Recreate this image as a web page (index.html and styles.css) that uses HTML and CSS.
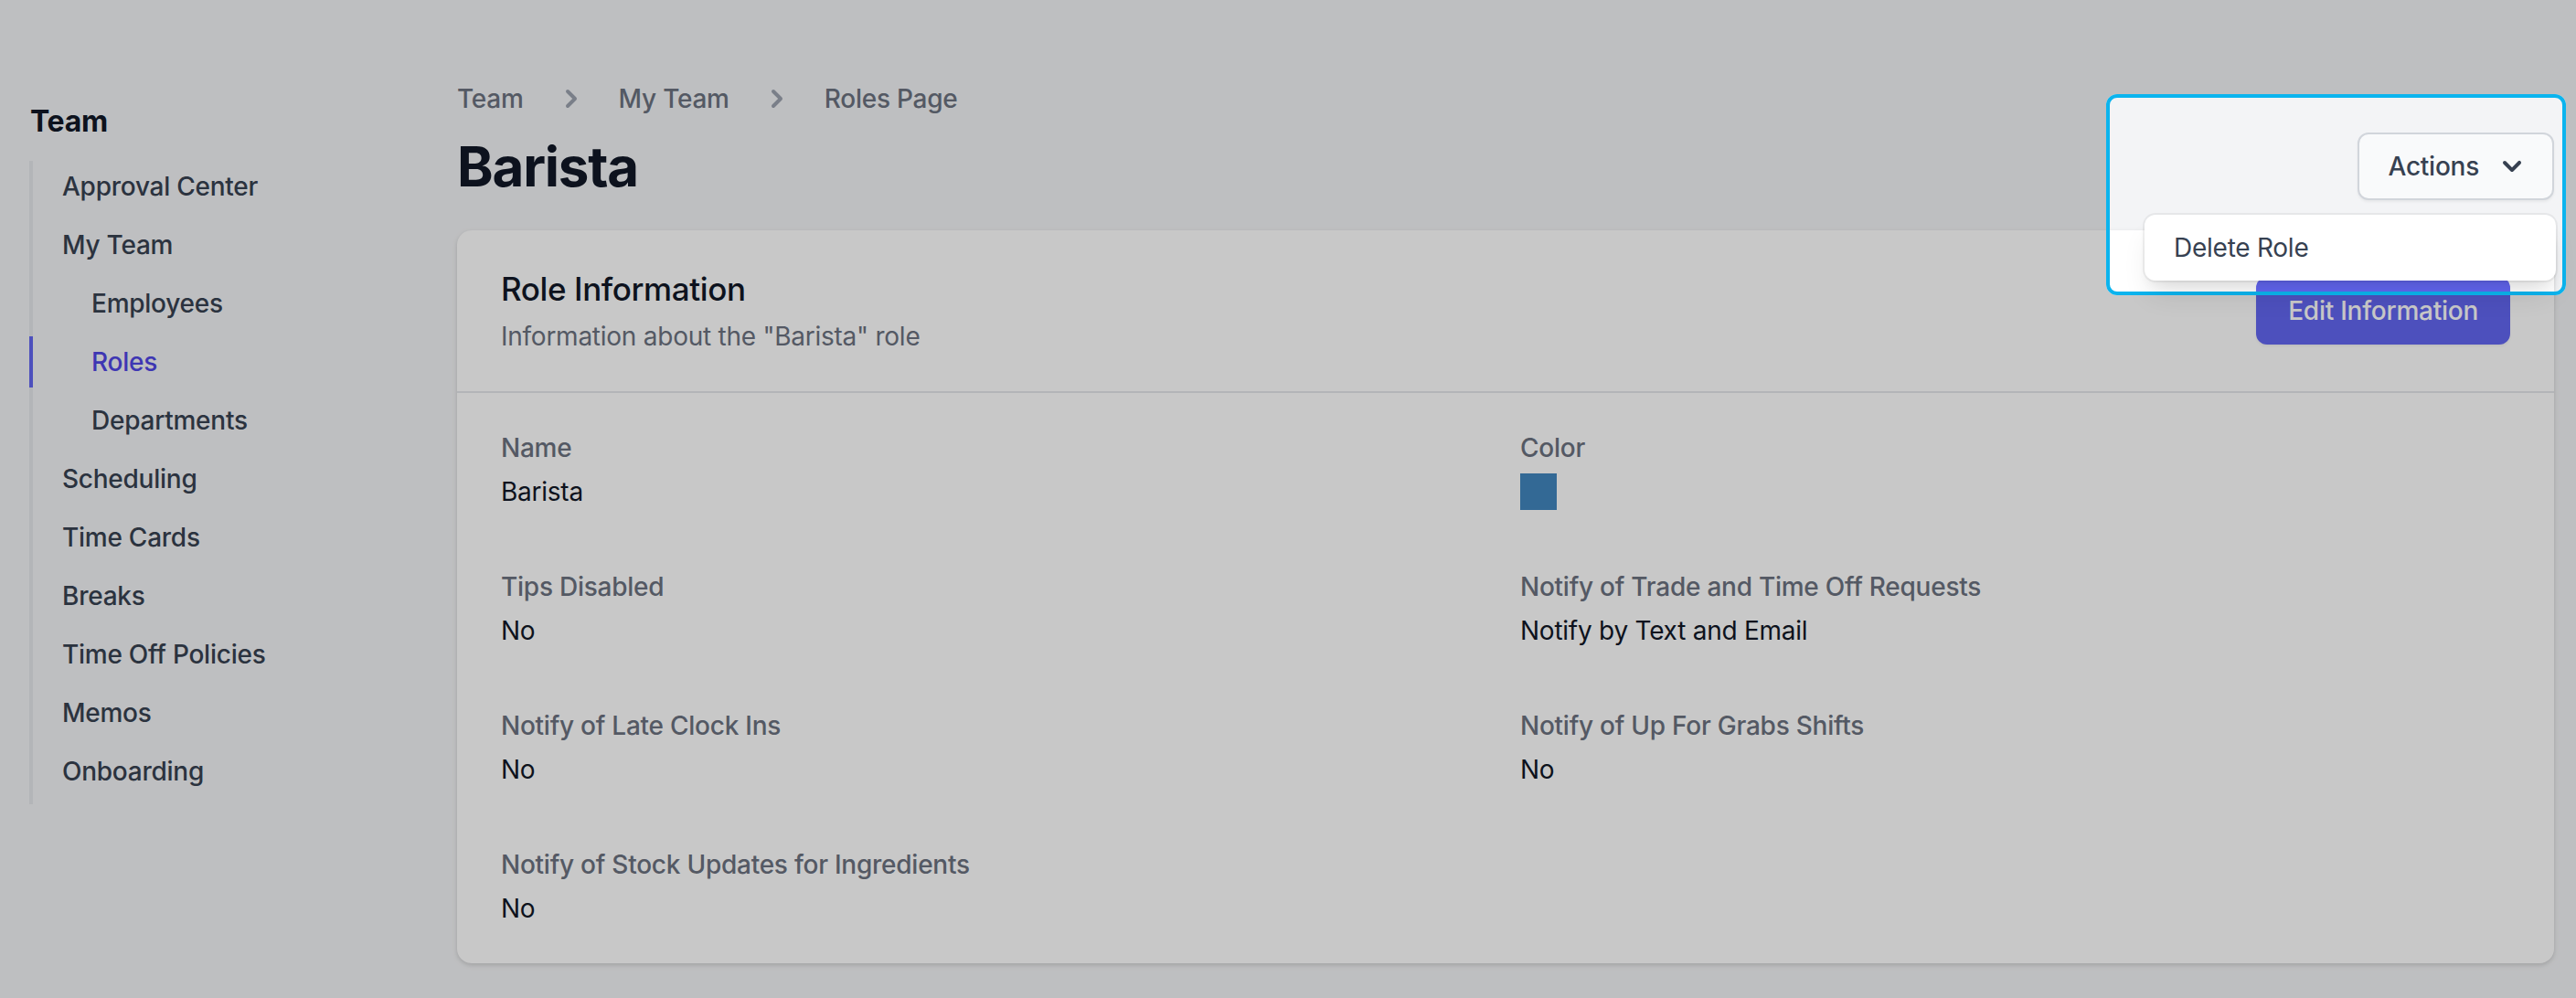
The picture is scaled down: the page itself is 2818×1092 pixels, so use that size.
FILE: index.html
```html
<!DOCTYPE html>
<html lang="en">
<head>
<meta charset="utf-8">
<title>Barista - Roles Page</title>
<link rel="stylesheet" href="styles.css">
</head>
<body>
<div class="layout">
  <aside class="sidebar">
    <h2 class="side-title">Team</h2>
    <ul class="side-nav">
      <li><a class="nav-item">Approval Center</a></li>
      <li><a class="nav-item">My Team</a></li>
      <li><a class="nav-item sub">Employees</a></li>
      <li><a class="nav-item sub active">Roles</a></li>
      <li><a class="nav-item sub">Departments</a></li>
      <li><a class="nav-item">Scheduling</a></li>
      <li><a class="nav-item">Time Cards</a></li>
      <li><a class="nav-item">Breaks</a></li>
      <li><a class="nav-item">Time Off Policies</a></li>
      <li><a class="nav-item">Memos</a></li>
      <li><a class="nav-item">Onboarding</a></li>
    </ul>
  </aside>

  <main class="main">
    <nav class="breadcrumb">
      <ol class="crumbs">
        <li class="crumb"><a class="crumb-link">Team</a></li>
        <li class="crumb">
          <svg class="crumb-chev" viewBox="0 0 20 20" fill="currentColor"><path fill-rule="evenodd" d="M7.293 14.707a1 1 0 010-1.414L10.586 10 7.293 6.707a1 1 0 011.414-1.414l4 4a1 1 0 010 1.414l-4 4a1 1 0 01-1.414 0z" clip-rule="evenodd"/></svg>
          <a class="crumb-link">My Team</a>
        </li>
        <li class="crumb">
          <svg class="crumb-chev" viewBox="0 0 20 20" fill="currentColor"><path fill-rule="evenodd" d="M7.293 14.707a1 1 0 010-1.414L10.586 10 7.293 6.707a1 1 0 011.414-1.414l4 4a1 1 0 010 1.414l-4 4a1 1 0 01-1.414 0z" clip-rule="evenodd"/></svg>
          <a class="crumb-link">Roles Page</a>
        </li>
      </ol>
    </nav>

    <div class="page-head">
      <h1 class="page-title">Barista</h1>
      <div class="actions">
        <button class="actions-btn" type="button">Actions
          <svg class="actions-chev" viewBox="0 0 20 20" fill="currentColor"><path fill-rule="evenodd" d="M5.293 7.293a1 1 0 011.414 0L10 10.586l3.293-3.293a1 1 0 111.414 1.414l-4 4a1 1 0 01-1.414 0l-4-4a1 1 0 010-1.414z" clip-rule="evenodd"/></svg>
        </button>
        <div class="menu">
          <a class="menu-item">Delete Role</a>
        </div>
        <div class="spotlight"></div>
      </div>
    </div>

    <section class="card">
      <div class="card-head">
        <div>
          <h3 class="card-title">Role Information</h3>
          <p class="card-sub">Information about the "Barista" role</p>
        </div>
        <button class="btn-primary" type="button">Edit Information</button>
      </div>
      <dl class="info-grid">
        <div class="field">
          <dt class="label">Name</dt>
          <dd class="value">Barista</dd>
        </div>
        <div class="field">
          <dt class="label">Color</dt>
          <dd class="value"><span class="swatch"></span></dd>
        </div>
        <div class="field">
          <dt class="label">Tips Disabled</dt>
          <dd class="value">No</dd>
        </div>
        <div class="field">
          <dt class="label">Notify of Trade and Time Off Requests</dt>
          <dd class="value">Notify by Text and Email</dd>
        </div>
        <div class="field">
          <dt class="label">Notify of Late Clock Ins</dt>
          <dd class="value">No</dd>
        </div>
        <div class="field">
          <dt class="label">Notify of Up For Grabs Shifts</dt>
          <dd class="value">No</dd>
        </div>
        <div class="field">
          <dt class="label">Notify of Stock Updates for Ingredients</dt>
          <dd class="value">No</dd>
        </div>
      </dl>
    </section>
  </main>
</div>
</body>
</html>
```

FILE: styles.css
```css
* { box-sizing: border-box; }

html, body {
  margin: 0;
  height: 100%;
}

body {
  background: #f3f4f6;
  font-family: Inter, "Noto Sans", "Liberation Sans", sans-serif;
  color: #111827;
  letter-spacing: -0.25px;
  overflow: hidden;
  -webkit-font-smoothing: antialiased;
}

.layout {
  display: flex;
  align-items: flex-start;
}

/* Sidebar */
.sidebar {
  width: 500px;
  flex-shrink: 0;
  padding: 109px 0 0 32px;
}

.side-title {
  margin: 0 0 19px 1px;
  font-size: 32px;
  line-height: 48px;
  font-weight: 700;
  color: #111827;
}

.side-nav {
  list-style: none;
  margin: 0;
  padding: 0 0 8px;
  border-left: 4px solid #e5e7eb;
  display: flex;
  flex-direction: column;
  gap: 8px;
}

.nav-item {
  display: block;
  padding: 8px 0 8px 32px;
  font-size: 28px;
  line-height: 40px;
  font-weight: 500;
  color: #374151;
  text-decoration: none;
}

.nav-item.sub { padding-left: 64px; }

.nav-item.active {
  margin-left: -4px;
  border-left: 4px solid #6366f1;
  color: #4f46e5;
}

/* Main */
.main {
  flex: 1;
  min-width: 0;
  padding: 88px 24px 0 0;
}

.crumbs {
  list-style: none;
  margin: 0;
  padding: 0;
  display: flex;
  align-items: center;
  gap: 32px;
}

.crumb {
  display: flex;
  align-items: center;
  gap: 32px;
}

.crumb-link {
  font-size: 28px;
  line-height: 40px;
  font-weight: 500;
  color: #6b7280;
  text-decoration: none;
}

.crumb-chev {
  width: 40px;
  height: 40px;
  color: #9ca3af;
  flex-shrink: 0;
}

.page-head {
  display: flex;
  justify-content: space-between;
  align-items: center;
  margin-top: 17px;
}

.page-title {
  margin: 0;
  font-size: 60px;
  line-height: 72px;
  font-weight: 700;
  letter-spacing: -1.2px;
  color: #111827;
}

.actions {
  position: relative;
}

.actions-btn {
  display: inline-flex;
  align-items: center;
  padding: 15px 24px 15px 32px;
  border: 2px solid #d1d5db;
  border-radius: 12px;
  background: #f9fafb;
  box-shadow: 0 2px 3px rgba(0, 0, 0, 0.05);
  font-family: inherit;
  font-size: 28px;
  line-height: 40px;
  font-weight: 500;
  letter-spacing: inherit;
  color: #374151;
}

.actions-chev {
  width: 40px;
  height: 40px;
  margin-left: 16px;
}

.menu {
  position: absolute;
  right: -2px;
  top: calc(100% + 16px);
  width: 450px;
  background: #fff;
  border-radius: 12px;
  box-shadow: 0 0 0 2px rgba(0, 0, 0, 0.05), 0 20px 30px -6px rgba(0, 0, 0, 0.1), 0 8px 12px -4px rgba(0, 0, 0, 0.06);
  z-index: 20;
}

.menu-item {
  display: block;
  padding: 16px 32px;
  font-size: 28px;
  line-height: 40px;
  color: #374151;
  text-decoration: none;
}

.spotlight {
  position: absolute;
  left: -275px;
  top: -42px;
  width: 503px;
  height: 220px;
  border: 4px solid #0bb4ee;
  border-radius: 12px;
  box-shadow: 0 0 0 4000px rgba(0, 0, 0, 0.216);
  z-index: 10;
  pointer-events: none;
}

/* Card */
.card {
  margin-top: 33px;
  background: #fff;
  border-radius: 16px;
  box-shadow: 0 2px 6px rgba(0, 0, 0, 0.1), 0 2px 4px rgba(0, 0, 0, 0.06);
}

.card-head {
  display: flex;
  justify-content: space-between;
  align-items: center;
  padding: 40px 48px;
  border-bottom: 2px solid #e5e7eb;
}

.card-title {
  margin: 0;
  font-size: 35px;
  line-height: 48px;
  font-weight: 500;
  letter-spacing: -0.4px;
  color: #111827;
}

.card-sub {
  margin: 8px 0 0;
  font-size: 28px;
  line-height: 40px;
  color: #6b7280;
}

.btn-primary {
  padding: 16px 34px;
  border: 1px solid transparent;
  border-radius: 12px;
  background: #6366f1;
  color: #fff;
  font-family: inherit;
  font-size: 28px;
  line-height: 40px;
  font-weight: 500;
  letter-spacing: inherit;
  box-shadow: 0 2px 3px rgba(0, 0, 0, 0.05);
}

.info-grid {
  margin: 0;
  padding: 40px 48px;
  display: grid;
  grid-template-columns: 1fr 1fr;
  column-gap: 32px;
  row-gap: 64px;
}

.label {
  font-size: 28px;
  line-height: 40px;
  font-weight: 500;
  color: #6b7280;
}

.value {
  margin: 8px 0 0;
  font-size: 28px;
  line-height: 40px;
  color: #111827;
}

.swatch {
  display: block;
  width: 40px;
  height: 40px;
  background: #4187bf;
}
```
